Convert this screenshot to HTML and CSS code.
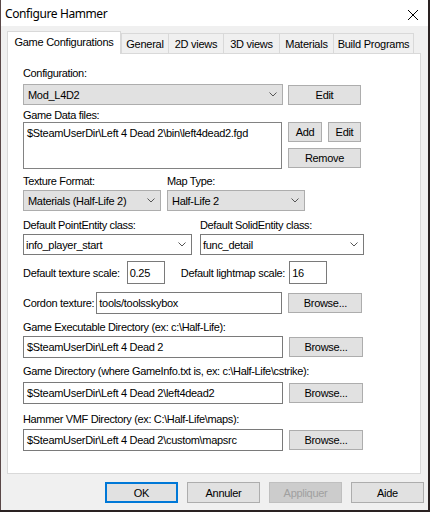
FILE: index.html
```html
<!DOCTYPE html>
<html>
<head>
<meta charset="utf-8">
<title>Configure Hammer</title>
<link rel="stylesheet" href="styles.css">
</head>
<body>
<div class="window">
  <div class="titlebar">
    <span class="title">Configure Hammer</span>
    <svg class="close" width="12" height="12" viewBox="0 0 12 12"><path d="M1 1 L11 11 M11 1 L1 11" stroke="#000" stroke-width="1" fill="none"/></svg>
  </div>
  <div class="client">
    <div class="tabs">
      <div class="tab selected t-game">Game Configurations</div>
      <div class="tab t-general">General</div>
      <div class="tab t-2d">2D views</div>
      <div class="tab t-3d">3D views</div>
      <div class="tab t-mat">Materials</div>
      <div class="tab t-build">Build Programs</div>
    </div>
    <div class="panel">
      <div class="label first">Configuration:</div>
      <div class="row r-config">
        <div class="combo w-config"><span>Mod_L4D2</span><svg class="chev" width="8" height="5" viewBox="0 0 8 5"><path d="M0.5 0.5 L4 4 L7.5 0.5" stroke="#555" fill="none"/></svg></div>
        <button class="btn w-wide btn-off1">Edit</button>
      </div>
      <div class="label l-data">Game Data files:</div>
      <div class="row r-data">
        <div class="listbox"><span>$SteamUserDir\Left 4 Dead 2\bin\left4dead2.fgd</span></div>
        <div class="side">
          <div class="pair">
            <button class="btn w-add">Add</button>
            <button class="btn w-edit">Edit</button>
          </div>
          <button class="btn w-wide">Remove</button>
        </div>
      </div>
      <div class="grid-tex">
        <div class="label">Texture Format:</div>
        <div class="label">Map Type:</div>
        <div class="combo"><span>Materials (Half-Life 2)</span><svg class="chev" width="8" height="5" viewBox="0 0 8 5"><path d="M0.5 0.5 L4 4 L7.5 0.5" stroke="#555" fill="none"/></svg></div>
        <div class="combo"><span>Half-Life 2</span><svg class="chev" width="8" height="5" viewBox="0 0 8 5"><path d="M0.5 0.5 L4 4 L7.5 0.5" stroke="#555" fill="none"/></svg></div>
      </div>
      <div class="grid-ent">
        <div class="label">Default PointEntity class:</div>
        <div class="label">Default SolidEntity class:</div>
        <div class="ecombo"><span>info_player_start</span><svg class="chev" width="8" height="5" viewBox="0 0 8 5"><path d="M0.5 0.5 L4 4 L7.5 0.5" stroke="#555" fill="none"/></svg></div>
        <div class="ecombo"><span>func_detail</span><svg class="chev" width="8" height="5" viewBox="0 0 8 5"><path d="M0.5 0.5 L4 4 L7.5 0.5" stroke="#555" fill="none"/></svg></div>
      </div>
      <div class="row r-scale">
        <span class="inl">Default texture scale:</span>
        <div class="edit small e-tex">0.25</div>
        <span class="inl l-light">Default lightmap scale:</span>
        <div class="edit small">16</div>
      </div>
      <div class="row r-cordon">
        <span class="inl">Cordon texture:</span>
        <div class="edit e-cordon">tools/toolsskybox</div>
        <button class="btn w-browse">Browse...</button>
      </div>
      <div class="group g-exe">
        <div class="label">Game Executable Directory (ex: c:\Half-Life):</div>
        <div class="row r-path">
          <div class="edit e-path">$SteamUserDir\Left 4 Dead 2</div>
          <button class="btn w-browse">Browse...</button>
        </div>
      </div>
      <div class="group g-dir">
        <div class="label">Game Directory (where GameInfo.txt is, ex: c:\Half-Life\cstrike):</div>
        <div class="row r-path">
          <div class="edit e-path">$SteamUserDir\Left 4 Dead 2\left4dead2</div>
          <button class="btn w-browse">Browse...</button>
        </div>
      </div>
      <div class="group g-vmf">
        <div class="label">Hammer VMF Directory (ex: C:\Half-Life\maps):</div>
        <div class="row r-path">
          <div class="edit e-path">$SteamUserDir\Left 4 Dead 2\custom\mapsrc</div>
          <button class="btn w-browse">Browse...</button>
        </div>
      </div>
    </div>
    <div class="footer">
      <button class="btn fbtn default">OK</button>
      <button class="btn fbtn">Annuler</button>
      <button class="btn fbtn disabled">Appliquer</button>
      <button class="btn fbtn">Aide</button>
    </div>
  </div>
</div>
</body>
</html>
```
FILE: styles.css
```css
* { box-sizing: border-box; }
html, body { margin: 0; padding: 0; }
body {
  width: 430px;
  height: 512px;
  background: #2a2222;
  font-family: "Liberation Sans", Arial, sans-serif;
  font-size: 11px;
  color: #000;
  overflow: hidden;
}
.window {
  width: 428px;
  height: 510px;
  background: #f0f0f0;
  border-left: 1px solid #5a4848;
  display: flex;
  flex-direction: column;
}
.titlebar {
  height: 26px;
  background: #fff;
  display: flex;
  align-items: center;
  justify-content: space-between;
  padding: 0 8px 0 4px;
}
.title {
  font-family: "Noto Sans", "Open Sans", sans-serif;
  font-size: 12px;
  letter-spacing: -0.4px;
  margin-top: 1px;
}
.close { margin-right: 1px; margin-top: 3px; }
.client {
  padding: 5px 0 0 6px;
  flex: 1;
  display: flex;
  flex-direction: column;
}
.tabs {
  display: flex;
  align-items: flex-end;
  height: 22px;
  position: relative;
  z-index: 1;
}
.tab {
  height: 20px;
  border: 1px solid #d9d9d9;
  border-bottom: none;
  background: #f0f0f0;
  margin-left: -1px;
  display: flex;
  align-items: center;
  justify-content: center;
  letter-spacing: -0.25px;
  white-space: nowrap;
  padding-top: 1px;
}
.tab.selected {
  height: 23px;
  background: #fff;
  margin-left: 0;
  margin-bottom: -1px;
  padding-top: 0;
  padding-bottom: 2px;
  position: relative;
  z-index: 2;
}
.t-game { width: 114px; }
.t-general { width: 48px; margin-left: 0; }
.t-2d { width: 56px; }
.t-3d { width: 57px; }
.t-mat { width: 55px; }
.t-build { width: 81px; }
.panel {
  width: 414px;
  height: 421px;
  background: #fff;
  border: 1px solid #d9d9d9;
  padding: 0 0 0 15px;
  display: flex;
  flex-direction: column;
}
.label {
  line-height: 13px;
  height: 13px;
  letter-spacing: -0.35px;
  white-space: nowrap;
}
.label.first { margin-top: 13px; }
.row { display: flex; align-items: flex-start; }
.r-config { margin-top: 4px; }
.btn {
  font-family: "Liberation Sans", Arial, sans-serif;
  font-size: 11px;
  letter-spacing: -0.3px;
  height: 20px;
  background: #e1e1e1;
  border: 1px solid #adadad;
  padding: 0;
  margin: 0;
  color: #000;
}
.combo, .ecombo {
  height: 21px;
  display: flex;
  align-items: center;
  justify-content: space-between;
  letter-spacing: -0.3px;
  white-space: nowrap;
}
.combo {
  background: #e1e1e1;
  border: 1px solid #adadad;
  padding: 0 5px 0 4px;
}
.ecombo {
  background: #fff;
  border: 1px solid #7a7a7a;
  padding: 0 5px 0 2px;
}
.chev { flex: none; }
.w-config { width: 260px; margin-right: 5px; }
.w-wide { width: 73px; }
.btn-off1 { margin-top: 1px; }
.l-data { margin-top: 4px; }
.r-data { margin-top: 0; }
.listbox {
  width: 259px;
  height: 47px;
  border: 1px solid #828282;
  padding: 4px 3px 3px;
  letter-spacing: -0.3px;
  margin-right: 6px;
  white-space: nowrap;
  line-height: 13px;
}
.side { display: flex; flex-direction: column; gap: 6px; }
.pair { display: flex; gap: 6px; }
.w-add { width: 34px; }
.w-edit { width: 33px; }
.grid-tex {
  display: grid;
  grid-template-columns: 138px 138px;
  column-gap: 6px;
  row-gap: 2px;
  margin-top: 6px;
}
.grid-tex .combo { height: 21px; }
.grid-ent {
  display: grid;
  grid-template-columns: 169px 164px;
  column-gap: 8px;
  row-gap: 2px;
  margin-top: 8px;
}
.r-scale { margin-top: 6px; align-items: center; }
.inl { letter-spacing: -0.3px; white-space: nowrap; }
.edit {
  height: 22px;
  border: 1px solid #7a7a7a;
  background: #fff;
  padding: 0 3px;
  display: flex;
  align-items: center;
  letter-spacing: -0.3px;
  white-space: nowrap;
}
.small { width: 38px; height: 23px; padding: 0 2px; }
.e-tex { margin-left: 7px; }
.l-light { margin-left: 16px; margin-right: 4px; }
.r-cordon { margin-top: 8px; align-items: flex-start; }
.r-cordon .inl { line-height: 22px; margin-right: 2px; }
.e-cordon { width: 186px; padding-left: 2px; }
.w-browse { width: 74px; margin-left: 6px; margin-top: 1px; }
.g-exe { margin-top: 7px; }
.g-exe .r-path { margin-top: 2px; }
.g-dir { margin-top: 7px; }
.g-dir .r-path { margin-top: 4px; }
.g-vmf { margin-top: 9px; }
.g-vmf .r-path { margin-top: 3px; }
.e-path { width: 260px; }
.footer {
  display: flex;
  justify-content: flex-end;
  gap: 9px;
  margin-top: 8px;
  padding-right: 4px;
}
.fbtn { width: 73px; height: 21px; }
.fbtn.default { border: 2px solid #0078d7; }
.fbtn.disabled { background: #cccccc; border-color: #bfbfbf; color: #a0a0a0; }
```
